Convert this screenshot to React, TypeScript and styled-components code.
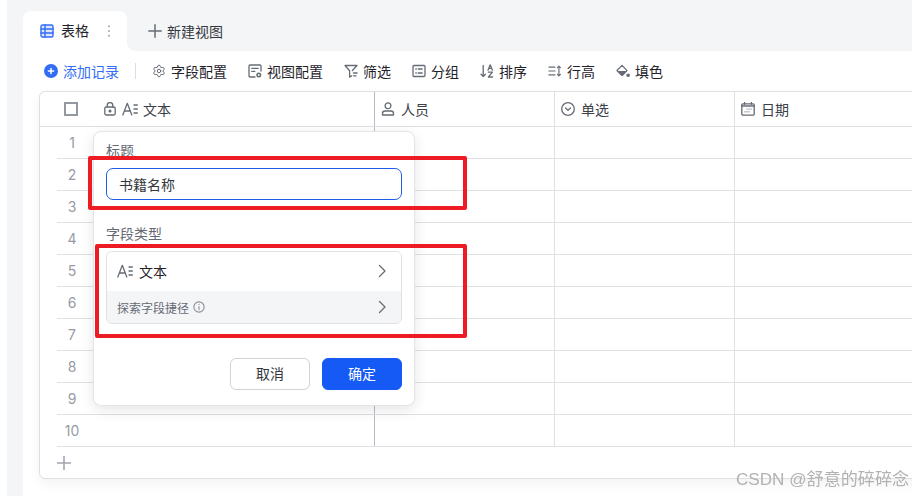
import React from "react";
import styled, { createGlobalStyle } from "styled-components";
import { Settings } from "lucide-react";

const Global = createGlobalStyle`
  html, body { margin: 0; padding: 0; background: #fff; }
  body { font-family: Inter, "Noto Sans CJK SC", sans-serif; font-size: 14px; color: #1f2329; }
`;

const Page = styled.div`
  position: relative;
  width: 912px;
  height: 496px;
  overflow: hidden;
  padding-left: 7px;
  box-sizing: border-box;
  background: #fff;
`;
const Shell = styled.div`
  height: 100%;
  padding-left: 16px;
  background: #f4f5f7;
  display: flex;
  flex-direction: column;
`;
const TabBar = styled.div`
  height: 51px;
  flex: none;
  box-sizing: border-box;
  padding-top: 11px;
  display: flex;
`;
const Tab = styled.div`
  position: relative;
  width: 104px;
  box-sizing: border-box;
  padding: 0 13px 0 17px;
  background: #fff;
  border-radius: 8px 8px 0 0;
  display: flex;
  align-items: center;
  gap: 7px;
  &::after {
    content: "";
    position: absolute;
    right: -8px;
    bottom: 0;
    width: 8px;
    height: 8px;
    background: radial-gradient(circle at 100% 0, transparent 7.5px, #fff 8px);
  }
`;
const TabLabel = styled.span`
  flex: 1;
  line-height: 20px;
  color: #1f2329;
`;
const NewView = styled.div`
  margin-left: 21px;
  display: flex;
  align-items: center;
  gap: 5px;
  color: #33373d;
`;
const Content = styled.div`
  flex: 1;
  background: #fff;
  padding: 0 0 0 16px;
  min-width: 0;
`;
const Toolbar = styled.div`
  height: 40px;
  box-sizing: border-box;
  padding: 0 0 1px 5px;
  display: flex;
  align-items: center;
  gap: 21px;
  white-space: nowrap;
`;
const ToolItem = styled.div<{ $accent?: boolean }>`
  display: flex;
  align-items: center;
  gap: 5px;
  color: ${(p) => (p.$accent ? "#336df4" : "#1f2329")};
`;
const Divider = styled.div`
  width: 1px;
  height: 16px;
  background: #dcdee2;
  margin: 0 -5px;
`;
const Table = styled.div`
  width: 900px;
  height: 388px;
  box-sizing: border-box;
  border: 1px solid #dee0e3;
  border-radius: 6px;
  box-shadow: 0 5px 12px rgba(0, 0, 0, 0.05);
  background: #fff;
`;
const HeadRow = styled.div`
  height: 35px;
  box-sizing: border-box;
  border-bottom: 1px solid #dee0e3;
  display: grid;
  grid-template-columns: 335px 180px 180px 1fr;
`;
const HeadCell = styled.div<{ $frozen?: boolean }>`
  display: flex;
  align-items: center;
  gap: ${(p) => (p.$frozen ? "5px" : "6px")};
  padding-left: ${(p) => (p.$frozen ? "24px" : "6px")};
  padding-bottom: 1px;
  border-right: 1px solid ${(p) => (p.$frozen ? "#b9bcc4" : "#e0e1e4")};
  color: #3b4048;
`;
const CheckBox = styled.div`
  width: 14px;
  height: 14px;
  box-sizing: border-box;
  border: 2px solid #9398a1;
  margin-right: 20px;
`;
const Row = styled.div`
  height: 32px;
  box-sizing: border-box;
  margin-left: 17px;
  border-bottom: 1px solid #dee0e3;
  display: grid;
  grid-template-columns: 318px 180px 180px 1fr;
`;
const Cell = styled.div<{ $frozen?: boolean }>`
  border-right: 1px solid ${(p) => (p.$frozen ? "#b9bcc4" : "#e0e1e4")};
`;
const RowNumber = styled.div`
  width: 30px;
  padding-top: 1px;
  line-height: 30px;
  text-align: center;
  color: #969ba4;
`;
const AddRow = styled.div`
  height: 31px;
  padding-left: 17px;
  display: flex;
  align-items: center;
`;
const Popover = styled.div`
  position: absolute;
  left: 93px;
  top: 131px;
  width: 322px;
  height: 275px;
  box-sizing: border-box;
  padding: 9px 12px 15px;
  background: #fff;
  border: 1px solid #e3e4e8;
  border-radius: 8px;
  box-shadow: 0 4px 14px rgba(0, 0, 0, 0.1);
  display: flex;
  flex-direction: column;
`;
const Label = styled.div`
  line-height: 20px;
  color: #646a73;
`;
const NameInput = styled.div`
  height: 32px;
  margin-top: 7px;
  box-sizing: border-box;
  border: 1px solid #1f5ce6;
  border-radius: 7px;
  padding-left: 12px;
  display: flex;
  align-items: center;
  color: #33373d;
`;
const TypeLabel = styled(Label)`
  margin-top: 24px;
`;
const TypeBox = styled.div`
  margin-top: 7px;
  height: 74px;
  box-sizing: border-box;
  border: 1px solid #e0e1e5;
  border-radius: 6px;
  overflow: hidden;
  display: flex;
  flex-direction: column;
`;
const TypeRow = styled.div<{ $muted?: boolean }>`
  flex: ${(p) => (p.$muted ? "0 0 32px" : "1")};
  padding: 0 11px 0 10px;
  display: flex;
  align-items: center;
  gap: 6px;
  background: ${(p) => (p.$muted ? "#f4f5f7" : "#fff")};
  color: ${(p) => (p.$muted ? "#646a73" : "#1f2329")};
  font-size: ${(p) => (p.$muted ? "12px" : "14px")};
`;
const Grow = styled.span`
  flex: 1;
  display: flex;
  align-items: center;
  gap: 4px;
`;
const Actions = styled.div`
  margin-top: 34px;
  display: flex;
  justify-content: flex-end;
  gap: 12px;
`;
const Button = styled.div<{ $primary?: boolean }>`
  width: 80px;
  height: 32px;
  box-sizing: border-box;
  padding-bottom: 2px;
  border-radius: 6px;
  display: flex;
  align-items: center;
  justify-content: center;
  font-size: 14px;
  background: ${(p) => (p.$primary ? "#165af5" : "#fff")};
  color: ${(p) => (p.$primary ? "#fff" : "#33373d")};
  border: 1px solid ${(p) => (p.$primary ? "#165af5" : "#d0d3d8")};
`;
const Annotation = styled.div<{ $l: number; $t: number; $w: number; $h: number }>`
  position: absolute;
  left: ${(p) => p.$l}px;
  top: ${(p) => p.$t}px;
  width: ${(p) => p.$w}px;
  height: ${(p) => p.$h}px;
  box-sizing: border-box;
  border: 4px solid #ed1c24;
  border-radius: 2px;
`;
const Watermark = styled.div`
  position: absolute;
  left: 736px;
  top: 469px;
  font-family: "Liberation Sans", "Noto Sans CJK SC", sans-serif;
  font-size: 17.1px;
  line-height: 22px;
  color: #b2b2b2;
  white-space: nowrap;
  filter: blur(0.35px);
`;
const Svg = styled.svg<{ $w?: number }>`
  flex: none;
  width: ${(p) => p.$w ?? 14}px;
  height: 14px;
  fill: none;
  stroke: currentColor;
  stroke-width: 1.3;
  stroke-linecap: round;
  stroke-linejoin: round;
  color: #666b74;
`;
const BlueSvg = styled(Svg)`
  color: #336df4;
`;
const LightSvg = styled(Svg)`
  color: #a3a8b0;
`;
const Gear = styled(Settings)`
  flex: none;
  width: 14px;
  height: 14px;
  color: #666b74;
`;

const TableIcon = () => (
  <BlueSvg viewBox="0 0 14 14">
    <rect x="1" y="1" width="12" height="12" rx="1.5" fill="#dbe6fd" strokeWidth="1.4" />
    <path d="M1 5h12M1 9h12M5 1v12" strokeWidth="1.4" />
  </BlueSvg>
);
const Dots = () => (
  <Svg viewBox="0 0 10 14" $w={10}>
    <path d="M5 2v.6M5 6.7v.6M5 11.4v.6" strokeWidth="1.5" stroke="#8a8f98" />
  </Svg>
);
const PlusIcon = () => (
  <Svg viewBox="0 0 14 14">
    <path d="M7 .8v12.4M.8 7h12.4" strokeWidth="1.5" />
  </Svg>
);
const AddCircle = () => (
  <BlueSvg viewBox="0 0 14 14">
    <circle cx="7" cy="7" r="7" fill="#336df4" stroke="none" />
    <path d="M7 4.4v5.2M4.4 7h5.2" stroke="#fff" strokeWidth="1.5" />
  </BlueSvg>
);
const ViewConfigIcon = () => (
  <Svg viewBox="0 0 14 14" strokeWidth="1.4">
    <path d="M7 13H2a1 1 0 0 1-1-1V2a1 1 0 0 1 1-1h10a1 1 0 0 1 1 1v5" />
    <path d="M3.8 4.4h6.4M3.8 7.4h3" />
    <circle cx="10.8" cy="11" r="1.7" strokeWidth="1.6" />
  </Svg>
);
const FilterIcon = () => (
  <Svg viewBox="0 0 14 14">
    <path d="M1 1.5h12l-4.6 5M1 1.5l4.6 5.3v6.3l2-1.2" />
    <path d="M9.5 9h3.6M9.5 11.8h2.6" />
  </Svg>
);
const GroupIcon = () => (
  <Svg viewBox="0 0 14 14" strokeWidth="1.4">
    <rect x="1" y="1.5" width="12" height="11" rx="1" />
    <path d="M3.8 5h.5M6.2 5h4M3.8 9h.5M6.2 9h4" />
  </Svg>
);
const SortIcon = () => (
  <Svg viewBox="0 0 14 14" strokeWidth="1.2">
    <path d="M3.2 1.5v11M1 10.3l2.2 2.2 2.2-2.2" />
    <path d="M8 6.2L10.2.8l2.2 5.4M8.8 4.4h2.8M8.4 8.2h4l-4 4.8h4.2" />
  </Svg>
);
const HeightIcon = () => (
  <Svg viewBox="0 0 16 14">
    <path d="M1 2.5h7M1 7h7M1 11.5h7M12.5 1.5v11M10.8 3.2l1.7-1.7 1.7 1.7M10.8 10.8l1.7 1.7 1.7-1.7" />
  </Svg>
);
const FillIcon = () => (
  <Svg viewBox="0 0 15 14">
    <path d="M2 7h9.6L7.2 11.3a1 1 0 0 1-1.4 0z" fill="currentColor" stroke="none" />
    <path d="M6.5 1L1 6.5 5.8 11.3a1 1 0 0 0 1.4 0L11.8 6.6z" />
    <circle cx="13" cy="11.5" r="1.3" fill="currentColor" />
  </Svg>
);
const LockIcon = () => (
  <Svg viewBox="0 0 14 14" strokeWidth="1.4">
    <rect x="1.8" y="5" width="10.4" height="8" rx="1.4" />
    <path d="M4.2 5V3.4a2.8 2.8 0 0 1 5.6 0V5" />
    <circle cx="7" cy="9" r=".9" fill="currentColor" />
  </Svg>
);
const TextTypeIcon = () => (
  <Svg viewBox="0 0 16 14" $w={16} strokeWidth="1.1">
    <path d="M.8 13L5.3 1.3 9.8 13M2.4 9h5.8M12 3h3.4M12 7h3.4M12 11h3.4" />
  </Svg>
);
const PersonIcon = () => (
  <Svg viewBox="0 0 14 14" strokeWidth="1.3">
    <circle cx="7" cy="3.8" r="2.9" />
    <path d="M1.5 13v-1.5c0-1.4 1-2.5 2.5-2.5h6c1.5 0 2.5 1.1 2.5 2.5V13z" />
  </Svg>
);
const SelectIcon = () => (
  <Svg viewBox="0 0 14 14">
    <circle cx="7" cy="7" r="6.3" />
    <path d="M4.6 6l2.4 2.4L9.4 6" />
  </Svg>
);
const CalendarIcon = () => (
  <Svg viewBox="0 0 14 14" strokeWidth="1.4">
    <rect x=".8" y="1.8" width="12.4" height="11.4" rx="1.2" />
    <path d="M3.6 .6v1.6M10.4 .6v1.6M.8 4h12.4" />
    <path d="M6 7h.1M8 7h.1M10 7h.1M4 9.8h.1M6 9.8h.1M8 9.8h.1" strokeWidth="1.2" />
  </Svg>
);
const ChevronIcon = () => (
  <Svg viewBox="0 0 14 14" strokeWidth="1.4">
    <path d="M3.5 1.5L9 7l-5.5 5.5" />
  </Svg>
);
const InfoSvg = styled(Svg)`
  width: 12px;
  height: 12px;
  color: #8a8f98;
`;
const InfoIcon = () => (
  <InfoSvg viewBox="0 0 14 14" strokeWidth="1.1">
    <circle cx="7" cy="7" r="6" />
    <path d="M7 6.4v3.6M7 4h.01" />
  </InfoSvg>
);

const tools: [React.ReactNode, string][] = [
  [<Gear strokeWidth={1.7} />, "字段配置"],
  [<ViewConfigIcon />, "视图配置"],
  [<FilterIcon />, "筛选"],
  [<GroupIcon />, "分组"],
  [<SortIcon />, "排序"],
  [<HeightIcon />, "行高"],
  [<FillIcon />, "填色"],
];

export default function App() {
  return (
    <Page>
      <Global />
      <Shell>
        <TabBar>
          <Tab>
            <TableIcon />
            <TabLabel>表格</TabLabel>
            <Dots />
          </Tab>
          <NewView>
            <PlusIcon />
            新建视图
          </NewView>
        </TabBar>
        <Content>
          <Toolbar>
            <ToolItem $accent>
              <AddCircle />
              添加记录
            </ToolItem>
            <Divider />
            {tools.map(([icon, label]) => (
              <ToolItem key={label}>
                {icon}
                {label}
              </ToolItem>
            ))}
          </Toolbar>
          <Table>
            <HeadRow>
              <HeadCell $frozen>
                <CheckBox />
                <LockIcon />
                <TextTypeIcon />
                文本
              </HeadCell>
              <HeadCell>
                <PersonIcon />
                人员
              </HeadCell>
              <HeadCell>
                <SelectIcon />
                单选
              </HeadCell>
              <HeadCell>
                <CalendarIcon />
                日期
              </HeadCell>
            </HeadRow>
            {Array.from({ length: 10 }, (_, i) => (
              <Row key={i}>
                <Cell $frozen>
                  <RowNumber>{i + 1}</RowNumber>
                </Cell>
                <Cell />
                <Cell />
                <Cell />
              </Row>
            ))}
            <AddRow>
              <LightSvg viewBox="0 0 14 14">
                <path d="M7 .5v13M.5 7h13" strokeWidth="1.6" />
              </LightSvg>
            </AddRow>
          </Table>
        </Content>
      </Shell>
      <Popover>
        <Label>标题</Label>
        <NameInput>书籍名称</NameInput>
        <TypeLabel>字段类型</TypeLabel>
        <TypeBox>
          <TypeRow>
            <TextTypeIcon />
            <Grow>文本</Grow>
            <ChevronIcon />
          </TypeRow>
          <TypeRow $muted>
            <Grow>
              探索字段捷径
              <InfoIcon />
            </Grow>
            <ChevronIcon />
          </TypeRow>
        </TypeBox>
        <Actions>
          <Button>取消</Button>
          <Button $primary>确定</Button>
        </Actions>
      </Popover>
      <Annotation $l={88} $t={156} $w={379} $h={54} />
      <Annotation $l={95} $t={244} $w={372} $h={94} />
      <Watermark>CSDN @舒意的碎碎念</Watermark>
    </Page>
  );
}
